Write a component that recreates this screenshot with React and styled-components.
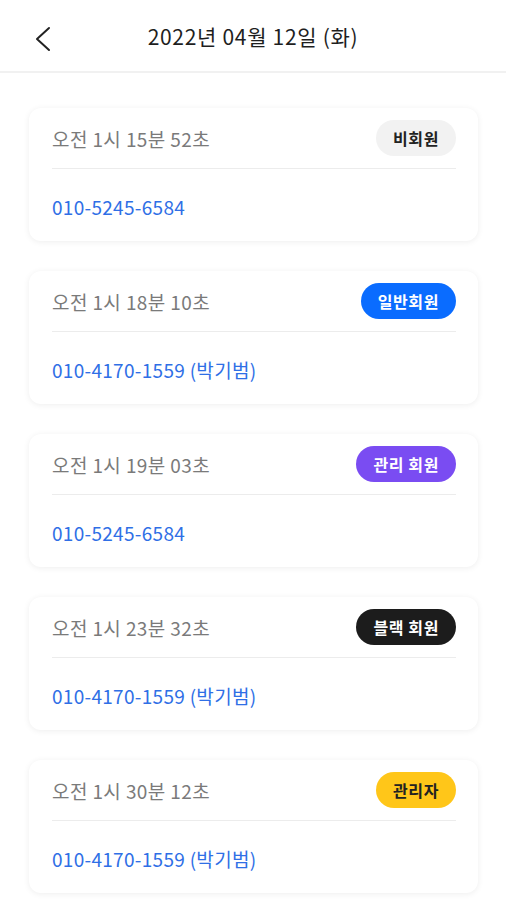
import React from 'react';
import styled, { createGlobalStyle } from 'styled-components';

const GlobalStyle = createGlobalStyle`
  * { box-sizing: border-box; }
  body {
    margin: 0;
    background: #fff;
    font-family: "Noto Sans CJK KR", "Noto Sans", sans-serif;
  }
`;

// 방문 기록 데이터
const visits = [
  { time: '오전 1시 15분 52초', phone: '010-5245-6584', type: 'guest' },
  { time: '오전 1시 18분 10초', phone: '010-4170-1559 (박기범)', type: 'member' },
  { time: '오전 1시 19분 03초', phone: '010-5245-6584', type: 'managed' },
  { time: '오전 1시 23분 32초', phone: '010-4170-1559 (박기범)', type: 'black' },
  { time: '오전 1시 30분 12초', phone: '010-4170-1559 (박기범)', type: 'admin' }
];

const badges = {
  guest: { label: '비회원', bg: '#f2f2f2', color: '#222' },
  member: { label: '일반회원', bg: '#0a6cff', color: '#fff' },
  managed: { label: '관리 회원', bg: '#7a4cf2', color: '#fff' },
  black: { label: '블랙 회원', bg: '#1c1c1c', color: '#fff' },
  admin: { label: '관리자', bg: '#ffc619', color: '#222' }
};

const Page = styled.div`
  width: 506px;
  min-height: 900px;
  background: #fff;
`;

const Header = styled.header`
  height: 73px;
  display: flex;
  align-items: center;
  justify-content: center;
  position: relative;
  border-bottom: 2px solid #f1f1f1;
`;

const BackButton = styled.button`
  position: absolute;
  left: 30px;
  top: 24px;
  width: 26px;
  height: 30px;
  padding: 0;
  border: none;
  background: none;
  display: flex;
  align-items: center;
  justify-content: center;
`;

const Title = styled.h1`
  margin: 0;
  font-size: 21px;
  font-weight: 400;
  color: #1e1e1e;
  letter-spacing: 0.7px;
`;

const List = styled.div`
  display: flex;
  flex-direction: column;
  gap: 30px;
  padding: 35px 28px 0 29px;
`;

const Card = styled.div`
  background: #fff;
  border-radius: 12px;
  box-shadow: 0 1px 6px rgba(0, 0, 0, 0.07);
  padding: 12px 22px 0 23px;
`;

const TopRow = styled.div`
  display: flex;
  align-items: center;
  justify-content: space-between;
  height: 36px;
  padding-bottom: 12px;
  box-sizing: content-box;
  border-bottom: 1px solid #ececec;
`;

const Time = styled.span`
  font-size: 19px;
  color: #7a7a7a;
  letter-spacing: 0.4px;
`;

const Badge = styled.span`
  height: 36px;
  padding: 0 17px;
  border-radius: 18px;
  display: inline-flex;
  align-items: center;
  font-size: 16px;
  font-weight: 700;
  letter-spacing: 0.6px;
  background: ${(p) => p.bg};
  color: ${(p) => p.color};
`;

const Phone = styled.div`
  padding: 27px 0 23px;
  line-height: 22px;
  font-size: 19px;
  color: #2f6fe6;
  letter-spacing: 0.3px;
`;

const App = () => (
  <Page>
    <GlobalStyle />
    <Header>
      <BackButton>
        <svg width="18" height="26" viewBox="0 0 18 26" fill="none">
          <path d="M15 2L3 13l12 11" stroke="#222" strokeWidth="2" strokeLinecap="round" strokeLinejoin="round" />
        </svg>
      </BackButton>
      <Title>2022년 04월 12일 (화)</Title>
    </Header>
    <List>
      {visits.map((v, i) => {
        const b = badges[v.type];
        return (
          <Card key={i}>
            <TopRow>
              <Time>{v.time}</Time>
              <Badge bg={b.bg} color={b.color}>{b.label}</Badge>
            </TopRow>
            <Phone>{v.phone}</Phone>
          </Card>
        );
      })}
    </List>
  </Page>
);

export default App;
